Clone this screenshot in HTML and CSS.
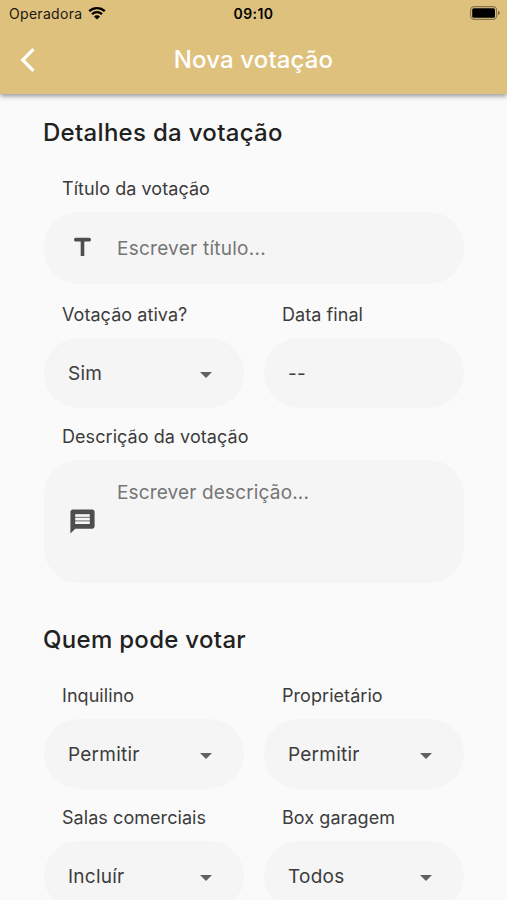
FILE: index.html
```html
<!DOCTYPE html>
<html lang="pt">
<head>
<meta charset="utf-8">
<title>Nova votação</title>
<link rel="stylesheet" href="styles.css">
</head>
<body>
<div class="screen">
  <header class="top">
    <div class="status">
      <div class="carrier"><span>Operadora</span>
        <svg class="wifi" viewBox="0 0 18 14"><path d="M1.2 5.2a11.2 11.2 0 0 1 15.6 0M4 8.2a7.2 7.2 0 0 1 10 0" fill="none" stroke="#000" stroke-width="2.3"/><path d="M9 13.6 5.9 10.6a4.4 4.4 0 0 1 6.2 0z"/></svg>
      </div>
      <div class="time">09:10</div>
      <svg class="battery" viewBox="0 0 30 14"><rect x=".6" y=".6" width="26" height="12.8" rx="3.6" fill="none" stroke="#000" stroke-opacity=".4" stroke-width="1.1"/><rect x="2.2" y="2.2" width="22.8" height="9.6" rx="1.6"/><path d="M28 4.8q1.8.8 1.8 2.2T28 9.2z" fill-opacity=".45"/></svg>
    </div>
    <div class="bar">
      <svg class="back" viewBox="0 0 16 26"><path d="M13.5 2.2 2.7 13l10.8 10.8" fill="none" stroke="#fff" stroke-width="3.2"/></svg>
      <h1>Nova votação</h1>
    </div>
  </header>
  <main>
    <h2>Detalhes da votação</h2>
    <div class="group first">
      <label>Título da votação</label>
      <div class="field title">
        <svg class="icon" viewBox="0 0 24 24"><path d="M5 5.500C5 6.330 5.670 7 6.500 7h4v12h3V7h4c.830 0 1.500-.670 1.500-1.500S18.330 4 17.500 4h-11C5.670 4 5 4.670 5 5.500z"/></svg>
        <span class="hint">Escrever título...</span>
      </div>
    </div>
    <div class="pair">
      <div class="group"><label>Votação ativa?</label><div class="field"><span>Sim</span><i class="arrow"></i></div></div>
      <div class="group"><label>Data final</label><div class="field"><span>--</span></div></div>
    </div>
    <div class="group">
      <label>Descrição da votação</label>
      <div class="field area">
        <svg class="icon" viewBox="0 0 24 24"><path d="M20 2H4c-1.100 0-1.990.900-1.990 2L2 22l4-4h14c1.100 0 2-.900 2-2V4c0-1.100-.900-2-2-2zm-2 12H6v-2h12v2zm0-3H6V9h12v2zm0-3H6V6h12v2z"/><path class="lines" d="M6 6h12v8H6z"/></svg>
        <span class="hint">Escrever descrição...</span>
      </div>
    </div>
    <h2 class="next">Quem pode votar</h2>
    <div class="pair">
      <div class="group"><label>Inquilino</label><div class="field"><span>Permitir</span><i class="arrow"></i></div></div>
      <div class="group"><label>Proprietário</label><div class="field"><span>Permitir</span><i class="arrow"></i></div></div>
    </div>
    <div class="pair">
      <div class="group"><label>Salas comerciais</label><div class="field"><span>Incluír</span><i class="arrow"></i></div></div>
      <div class="group"><label>Box garagem</label><div class="field"><span>Todos</span><i class="arrow"></i></div></div>
    </div>
  </main>
</div>
</body>
</html>
```
FILE: styles.css
```css
* { box-sizing: border-box; }
body { margin: 0; background: #fafafa; font-family: Inter, "Liberation Sans", sans-serif; color: #3c3c3c; }
.screen { height: 900px; overflow: hidden; display: flex; flex-direction: column; }
.top { flex: none; height: 94px; background: #dfc17e; box-shadow: 0 2px 5px rgba(0,0,0,.42); }
.status { height: 27px; display: grid; grid-template-columns: 1fr auto 1fr; align-items: center; padding: 0 7px 0 9px; color: #000; }
.carrier { display: flex; align-items: center; gap: 6px; font-size: 14px; letter-spacing: .3px; color: #1c180f; }
.wifi { width: 18px; height: 14px; margin-top: -1px; }
.time { font-size: 14px; font-weight: 600; letter-spacing: .4px; margin-right: 2px; }
.battery { width: 30px; height: 14px; justify-self: end; margin-top: -1px; }
.bar { height: 66px; display: grid; grid-template-columns: 60px 1fr 60px; align-items: center; }
.back { width: 16px; height: 26px; margin-left: 20px; }
h1 { margin: 0; text-align: center; font-size: 24px; line-height: 30px; font-weight: 500; letter-spacing: .13px; color: #fff; }
main { flex: none; padding: 0 43px 0 44px; }
h2 { margin: 24px 0 29px -1px; font-size: 24px; line-height: 30px; font-weight: 500; letter-spacing: .3px; color: #212121; }
h2.next { margin: 42px 0 29px -1px; }
.group { display: flex; flex-direction: column; margin-bottom: 17px; }
.first { margin-bottom: 19px; }
label { margin: 0 0 11px 18px; font-size: 18px; line-height: 24px; letter-spacing: .06px; }
.field { height: 70px; border-radius: 35px; background: #f5f5f5; display: flex; align-items: center; justify-content: space-between; padding: 2px 32px 0 24px; font-size: 19px; line-height: 24px; letter-spacing: .25px; }
.title { height: 72px; }
.title, .area { justify-content: flex-start; padding: 0 24px; gap: 20px; }
.title .hint { margin-top: 1px; }
.area { height: 123px; }
.area .hint { align-self: flex-start; margin-top: 21px; letter-spacing: .15px; }
.icon { width: 29px; height: 29px; fill: #4d4d4d; }
.lines { fill: #f5f5f5; fill-opacity: .35; }
.title .icon { margin-top: -2px; }
.hint { color: #757575; }
.arrow { width: 12px; height: 6px; margin-top: 2px; background: #616161; clip-path: polygon(0 0, 100% 0, 50% 100%); }
.pair { display: grid; grid-template-columns: 1fr 1fr; gap: 20px; }
```
